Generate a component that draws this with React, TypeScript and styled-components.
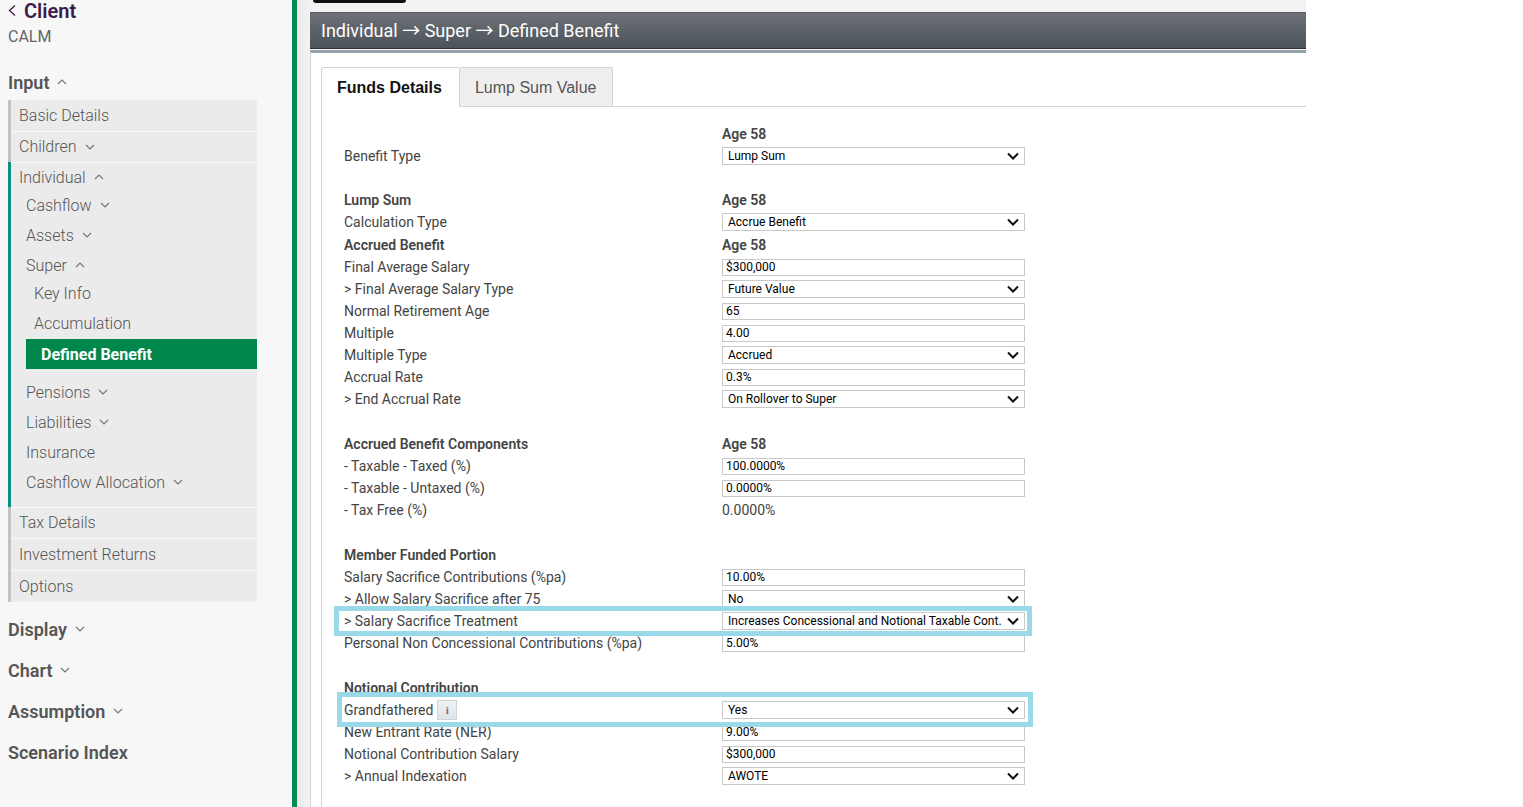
import React from "react";
import styled, { createGlobalStyle, css } from "styled-components";

const GlobalStyle = createGlobalStyle`
  * { box-sizing: border-box; }
  body {
    margin: 0;
    background: #fff;
    color: #444;
    font-family: Roboto, "Liberation Sans", sans-serif;
    font-size: 14px;
  }
  ul { list-style: none; margin: 0; padding: 0; }
  a { color: inherit; text-decoration: none; }
`;

const Page = styled.div`
  display: flex;
  height: 100vh;
  overflow: hidden;
`;

const Sidebar = styled.nav`
  flex: 0 0 297px;
  padding: 0 35px 0 8px;
  background: #f7f7f7;
  border-right: 5px solid #008a50;
`;

const ClientLink = styled.a`
  display: flex;
  align-items: center;
  gap: 7px;
  height: 22px;
  color: #3c1a4b;
  font-size: 20px;
  font-weight: 600;
  line-height: 22px;
`;

const ClientName = styled.p`
  margin: 5px 0 17px;
  color: #666;
  font-size: 16px;
  line-height: 20px;
`;

const Toggle = styled.button`
  display: flex;
  align-items: center;
  width: 100%;
  padding: 0;
  border: 0;
  background: none;
  color: inherit;
  font: inherit;
  text-align: left;
  cursor: pointer;
`;

const Heading = styled(Toggle)`
  height: 36px;
  margin-bottom: 5px;
  gap: 8px;
  color: #555;
  font-size: 18px;
  font-weight: 600;
`;

const InputHeading = styled(Heading)`
  margin-bottom: 0;
`;

const Menu = styled.ul`
  margin-bottom: 9px;
  color: #555;
  font-size: 16px;
  font-weight: 300;
`;

const MenuItem = styled.li<{ $open?: boolean }>`
  padding: 0 0 0 8px;
  background: #ebebeb;
  border-left: 3px solid ${(p) => (p.$open ? "#0b8f7f" : "#c2c2c2")};
  ${(p) => p.$open && css`padding-bottom: 10px;`}
  & + & { box-shadow: inset 0 1px #f9f9f9; }
`;

const MenuToggle = styled(Toggle)<{ $h: number }>`
  height: ${(p) => p.$h}px;
  gap: 8px;
`;

const SubMenu = styled.ul<{ $level: number }>`
  margin-top: -2px;
  padding-left: ${(p) => (p.$level === 1 ? 7 : 0)}px;
`;

const Nested = styled.div`
  padding-left: 8px;
`;

const ActiveLink = styled.a`
  display: flex;
  align-items: center;
  height: 30px;
  margin: 1px 0 8px;
  padding-left: 15px;
  background: #00874b;
  color: #fff;
  font-weight: 700;
`;

const Main = styled.main`
  display: flex;
  flex-direction: column;
  flex: 1;
  min-width: 0;
  margin-right: 217px;
  padding-left: 13px;
  background: linear-gradient(to right, #eaeaea, #f3f3f3 13px);
`;

const TopStrip = styled.div`
  flex: none;
  height: 12px;
  padding-left: 3px;
`;

const TopTab = styled.div`
  width: 93px;
  height: 3px;
  border-radius: 0 0 3px 3px;
  background: #111;
`;

const TitleBar = styled.h1`
  flex: none;
  height: 37px;
  margin: 0;
  padding-left: 11px;
  border-top: 1px solid #555860;
  border-bottom: 1px solid #2d3036;
  background: linear-gradient(#6e7178, #4b5359);
  color: #fff;
  font-size: 18px;
  font-weight: 400;
  line-height: 35px;
`;

const Arrow = styled.span`
  font-family: "Noto Sans CJK JP", sans-serif;
  line-height: 1;
`;

const Panel = styled.section`
  flex: 1 0 auto;
  margin-top: 1px;
  padding: 14px 0 0 10px;
  background: #fff;
  border-top: 3px solid #93a1a9;
  border-left: 1px solid #d3d3d3;
`;

const Tabs = styled.div`
  display: flex;
  height: 40px;
  border-bottom: 1px solid #d3d3d3;
`;

const Tab = styled.button<{ $active?: boolean }>`
  height: ${(p) => (p.$active ? 40 : 39)}px;
  padding: ${(p) => (p.$active ? "0 17px 0 15px" : "1px 16px 0 15px")};
  border: 1px solid #d3d3d3;
  border-bottom: 0;
  border-left-width: ${(p) => (p.$active ? 1 : 0)}px;
  border-radius: 2px 2px 0 0;
  background: ${(p) => (p.$active ? "#fff" : "#efefef")};
  color: ${(p) => (p.$active ? "#111" : "#555")};
  font-family: "Liberation Sans", Arial, sans-serif;
  font-size: 16px;
  font-weight: ${(p) => (p.$active ? 700 : 400)};
`;

const Form = styled.form`
  min-height: 701px;
  padding: 16px 0 0 22px;
  border-left: 1px solid #d3d3d3;
`;

const Section = styled.div<{ $gap: number }>`
  margin-top: ${(p) => p.$gap}px;
`;

const Row = styled.div<{ $head?: boolean }>`
  position: relative;
  display: grid;
  grid-template-columns: 378px 303px;
  align-items: center;
  height: 22px;
  font-weight: ${(p) => (p.$head ? 600 : 400)};
`;

const LabelCell = styled.div`
  display: flex;
  align-items: center;
  gap: 4px;
`;

const InfoButton = styled.button`
  width: 20px;
  height: 20px;
  padding: 0;
  border: 1px solid #d0d4d8;
  background: linear-gradient(#f0f2f4, #dfe4e8);
  color: #6b7680;
  font: 700 11px "Liberation Serif", serif;
`;

const fieldStyle = css`
  width: 100%;
  border: 1px solid #c8c8c8;
  border-radius: 0;
  background: #fff;
  color: #000;
  font-family: Roboto, "Liberation Sans", sans-serif;
  font-size: 12px;
`;

const TextInput = styled.input`
  ${fieldStyle}
  height: 17px;
  padding: 0 3px;
`;

const SelectWrap = styled.div`
  position: relative;
  display: flex;
  & > svg { position: absolute; right: 6px; top: 5px; pointer-events: none; }
`;

const Select = styled.select`
  ${fieldStyle}
  height: 18px;
  padding: 0 18px 0 5px;
  appearance: none;
`;

const Highlight = styled.div<{ $wide?: boolean }>`
  position: absolute;
  z-index: 1;
  top: ${(p) => (p.$wide ? -4 : -7)}px;
  bottom: ${(p) => (p.$wide ? -4 : -6)}px;
  left: ${(p) => (p.$wide ? -10 : -7)}px;
  width: ${(p) => (p.$wide ? 698 : 696)}px;
  border: 5px solid #99d9ea;
  pointer-events: none;
`;

function Caret({ up }: { up?: boolean }) {
  return (
    <svg width={10} height={6} viewBox="0 0 10 6" fill="none" stroke="#777" strokeWidth="1.2" aria-hidden="true">
      <path d={up ? "M1 5 L5 1 L9 5" : "M1 1 L5 5 L9 1"} />
    </svg>
  );
}

function Item({ label, h = 30, caret }: { label: string; h?: number; caret?: "up" | "down" }) {
  return (
    <MenuToggle type="button" $h={h}>
      {label}
      {caret && <Caret up={caret === "up"} />}
    </MenuToggle>
  );
}

type RowData = {
  label?: string;
  head?: boolean;
  input?: string;
  select?: string;
  text?: string;
  info?: boolean;
  mark?: "wide" | "narrow";
};

const sections: { gap: number; rows: RowData[] }[] = [
  { gap: 0, rows: [{ head: true, text: "Age 58" }, { label: "Benefit Type", select: "Lump Sum" }] },
  {
    gap: 22,
    rows: [
      { head: true, label: "Lump Sum", text: "Age 58" },
      { label: "Calculation Type", select: "Accrue Benefit" },
    ],
  },
  {
    gap: 1,
    rows: [
      { head: true, label: "Accrued Benefit", text: "Age 58" },
      { label: "Final Average Salary", input: "$300,000" },
      { label: "> Final Average Salary Type", select: "Future Value" },
      { label: "Normal Retirement Age", input: "65" },
      { label: "Multiple", input: "4.00" },
      { label: "Multiple Type", select: "Accrued" },
      { label: "Accrual Rate", input: "0.3%" },
      { label: "> End Accrual Rate", select: "On Rollover to Super" },
    ],
  },
  {
    gap: 23,
    rows: [
      { head: true, label: "Accrued Benefit Components", text: "Age 58" },
      { label: "- Taxable - Taxed (%)", input: "100.0000%" },
      { label: "- Taxable - Untaxed (%)", input: "0.0000%" },
      { label: "- Tax Free (%)", text: "0.0000%" },
    ],
  },
  {
    gap: 23,
    rows: [
      { head: true, label: "Member Funded Portion" },
      { label: "Salary Sacrifice Contributions (%pa)", input: "10.00%" },
      { label: "> Allow Salary Sacrifice after 75", select: "No" },
      {
        label: "> Salary Sacrifice Treatment",
        select: "Increases Concessional and Notional Taxable Cont.",
        mark: "wide",
      },
      { label: "Personal Non Concessional Contributions (%pa)", input: "5.00%" },
    ],
  },
  {
    gap: 23,
    rows: [
      { head: true, label: "Notional Contribution" },
      { label: "Grandfathered", select: "Yes", info: true, mark: "narrow" },
      { label: "New Entrant Rate (NER)", input: "9.00%" },
      { label: "Notional Contribution Salary", input: "$300,000" },
      { label: "> Annual Indexation", select: "AWOTE" },
    ],
  },
];

function FormRow({ row, id }: { row: RowData; id: string }) {
  const hasField = Boolean(row.input || row.select);
  return (
    <Row $head={row.head}>
      <LabelCell>
        {hasField ? <label htmlFor={id}>{row.label}</label> : row.label}
        {row.info && <InfoButton type="button" aria-label="About grandfathering">i</InfoButton>}
      </LabelCell>
      {row.input && <TextInput id={id} defaultValue={row.input} />}
      {row.select && (
        <SelectWrap>
          <Select id={id}>
            <option>{row.select}</option>
          </Select>
          <svg width="12" height="9" viewBox="0 0 12 9" fill="none" stroke="#111" strokeWidth="2" aria-hidden="true">
            <path d="M1 1.5 L6 6.5 L11 1.5" />
          </svg>
        </SelectWrap>
      )}
      {row.text && <span>{row.text}</span>}
      {row.mark && <Highlight $wide={row.mark === "wide"} />}
    </Row>
  );
}

export default function App() {
  return (
    <>
      <GlobalStyle />
      <Page>
        <Sidebar>
          <ClientLink href="#client">
            <svg width="9" height="12" viewBox="0 0 9 12" fill="none" stroke="#3c1a4b" strokeWidth="1.3" aria-hidden="true">
              <path d="M7 0.5 L1.5 5.5 L7 10.5" />
            </svg>
            Client
          </ClientLink>
          <ClientName>CALM</ClientName>
          <InputHeading type="button">
            Input <Caret up />
          </InputHeading>
          <Menu>
            <MenuItem><Item label="Basic Details" h={31} /></MenuItem>
            <MenuItem><Item label="Children" h={31} caret="down" /></MenuItem>
            <MenuItem $open>
              <Item label="Individual" h={30} caret="up" />
              <SubMenu $level={1}>
                <li><Item label="Cashflow" caret="down" /></li>
                <li><Item label="Assets" caret="down" /></li>
                <li>
                  <Item label="Super" caret="up" />
                  <SubMenu $level={2}>
                    <li><Nested><Item label="Key Info" /></Nested></li>
                    <li><Nested><Item label="Accumulation" /></Nested></li>
                    <li><ActiveLink href="#defined-benefit">Defined Benefit</ActiveLink></li>
                  </SubMenu>
                </li>
                <li><Item label="Pensions" caret="down" /></li>
                <li><Item label="Liabilities" caret="down" /></li>
                <li><Item label="Insurance" /></li>
                <li><Item label="Cashflow Allocation" caret="down" /></li>
              </SubMenu>
            </MenuItem>
            <MenuItem><Item label="Tax Details" h={31} /></MenuItem>
            <MenuItem><Item label="Investment Returns" h={32} /></MenuItem>
            <MenuItem><Item label="Options" h={32} /></MenuItem>
          </Menu>
          <Heading type="button">Display <Caret /></Heading>
          <Heading type="button">Chart <Caret /></Heading>
          <Heading type="button">Assumption <Caret /></Heading>
          <Heading type="button">Scenario Index</Heading>
        </Sidebar>
        <Main>
          <TopStrip><TopTab /></TopStrip>
          <TitleBar>
            Individual <Arrow>→</Arrow> Super <Arrow>→</Arrow> Defined Benefit
          </TitleBar>
          <Panel>
            <Tabs role="tablist">
              <Tab type="button" role="tab" aria-selected="true" $active>Funds Details</Tab>
              <Tab type="button" role="tab" aria-selected="false">Lump Sum Value</Tab>
            </Tabs>
            <Form>
              {sections.map((section, s) => (
                <Section key={s} $gap={section.gap}>
                  {section.rows.map((row, r) => (
                    <FormRow key={r} row={row} id={`field-${s}-${r}`} />
                  ))}
                </Section>
              ))}
            </Form>
          </Panel>
        </Main>
      </Page>
    </>
  );
}
